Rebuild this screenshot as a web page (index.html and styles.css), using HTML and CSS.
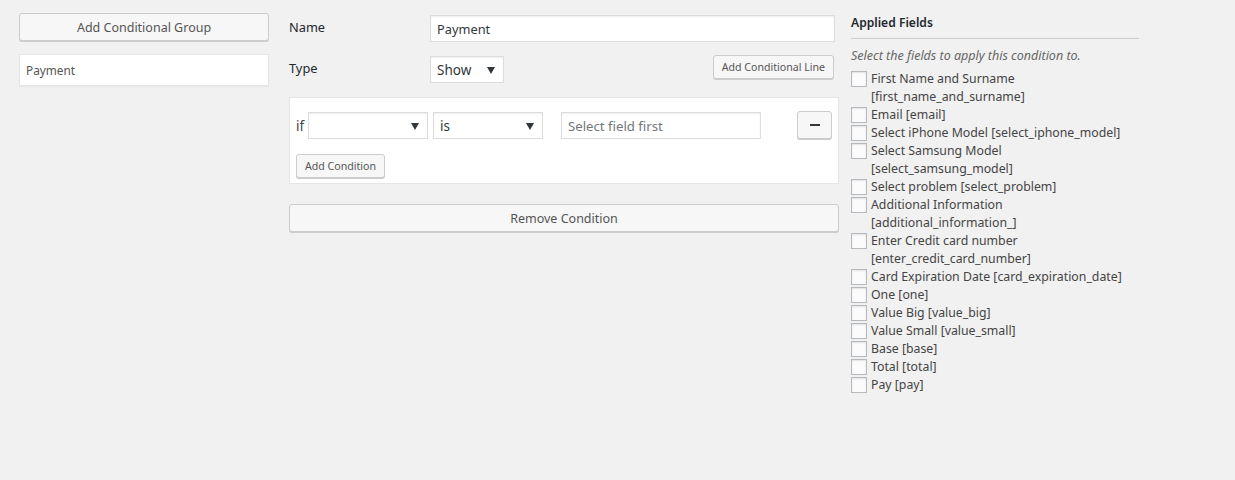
FILE: index.html
```html
<!DOCTYPE html>
<html>
<head lang="en">
    <meta charset="UTF-8">
    <title>Conditional Logic</title>
    <link rel="stylesheet" href="styles.css">
</head>
<body>
<div class="wrap">
    <!-- groups -->
    <div class="groups">
        <button class="button button-large" type="button">Add Conditional Group</button>
        <div class="group-item">Payment</div>
    </div>

    <!-- condition editor -->
    <div class="editor">
        <div class="form-row">
            <label class="form-label">Name</label>
            <input class="text-input" type="text" value="Payment">
        </div>
        <div class="form-row">
            <label class="form-label">Type</label>
            <div class="type-line">
                <span class="select select-type">Show</span>
                <button class="button button-small" type="button">Add Conditional Line</button>
            </div>
        </div>

        <div class="cond-box">
            <div class="cond-line">
                <span class="cond-if">if</span>
                <span class="select select-field"></span>
                <span class="select select-op">is</span>
                <input class="text-input cond-value" type="text" placeholder="Select field first">
                <button class="button button-minus" type="button"><span class="minus"></span></button>
            </div>
            <button class="button button-small" type="button">Add Condition</button>
        </div>

        <button class="button button-large button-block" type="button">Remove Condition</button>
    </div>

    <!-- applied fields -->
    <div class="applied">
        <h3 class="applied-title">Applied Fields</h3>
        <p class="applied-desc">Select the fields to apply this condition to.</p>
        <ul class="field-list">
            <li><span class="check"></span><span>First Name and Surname [first_name_and_surname]</span></li>
            <li><span class="check"></span><span>Email [email]</span></li>
            <li><span class="check"></span><span>Select iPhone Model [select_iphone_model]</span></li>
            <li><span class="check"></span><span>Select Samsung Model [select_samsung_model]</span></li>
            <li><span class="check"></span><span>Select problem [select_problem]</span></li>
            <li><span class="check"></span><span>Additional Information [additional_information_]</span></li>
            <li><span class="check"></span><span>Enter Credit card number [enter_credit_card_number]</span></li>
            <li><span class="check"></span><span>Card Expiration Date [card_expiration_date]</span></li>
            <li><span class="check"></span><span>One [one]</span></li>
            <li><span class="check"></span><span>Value Big [value_big]</span></li>
            <li><span class="check"></span><span>Value Small [value_small]</span></li>
            <li><span class="check"></span><span>Base [base]</span></li>
            <li><span class="check"></span><span>Total [total]</span></li>
            <li><span class="check"></span><span>Pay [pay]</span></li>
        </ul>
    </div>
</div>
</body>
</html>
```

FILE: styles.css
```css
* { margin: 0; padding: 0; box-sizing: border-box;}
ul { list-style: none;}
body {
    background-color: #f1f1f1;
    color: #444;
    font-family: "Noto Sans", "Open Sans", sans-serif;
    font-size: 12.3px;
    line-height: 18px;
}
.wrap {
    display: flex;
    align-items: flex-start;
    padding: 13px 0 0 19px;
}

/* buttons */
.button {
    display: inline-flex;
    align-items: center;
    justify-content: center;
    background-color: #f7f7f7;
    border: 1px solid #ccc;
    border-radius: 3px;
    box-shadow: 0 1px 0 #ccc;
    color: #555;
    font-family: inherit;
    cursor: pointer;
}
.button-large {
    height: 28px;
    font-size: 12.5px;
}
.button-small {
    height: 24px;
    padding: 0 8px;
    font-size: 10.6px;
}
.button-block { width: 100%;}

/* inputs */
.text-input {
    height: 27px;
    padding: 0 6px;
    background-color: #fff;
    border: 1px solid #ddd;
    box-shadow: inset 0 1px 2px rgba(0,0,0,.07);
    color: #32373c;
    font-family: inherit;
    font-size: 12.8px;
    outline: none;
}
.text-input::placeholder { color: #72777c;}
.select {
    position: relative;
    display: inline-flex;
    align-items: center;
    height: 27px;
    padding: 0 6px;
    background-color: #fff;
    border: 1px solid #ddd;
    box-shadow: inset 0 1px 2px rgba(0,0,0,.07);
    color: #32373c;
    font-size: 13.5px;
}
.select:after {
    content: "";
    position: absolute;
    right: 8px;
    top: 10px;
    border-left: 4px solid transparent;
    border-right: 4px solid transparent;
    border-top: 7px solid #32373c;
}

/* left column */
.groups {
    width: 250px;
    display: flex;
    flex-direction: column;
    gap: 13px;
}
.group-item {
    height: 32px;
    padding: 6px 6px;
    background-color: #fff;
    box-shadow: 0 1px 1px rgba(0,0,0,.04);
    border: 1px solid #e5e5e5;
    color: #555;
    font-size: 11.8px;
}

/* middle column */
.editor {
    width: 550px;
    margin-left: 20px;
    padding-top: 2px;
}
.form-row {
    display: grid;
    grid-template-columns: 141px 1fr;
    align-items: center;
    margin-bottom: 14px;
    color: #23282d;
    font-size: 12.8px;
}
.form-label { margin-top: -3px;}
.form-row .text-input { width: 405px;}
.type-line {
    display: flex;
    align-items: flex-start;
    justify-content: space-between;
    width: 404px;
}
.type-line .button-small { margin-top: -1px;}
.select-type { width: 74px;}

.cond-box {
    height: 87px;
    padding: 14px 6px 0 6px;
    background-color: #fff;
    border: 1px solid #e5e5e5;
    margin-bottom: 20px;
}
.cond-line {
    display: flex;
    align-items: center;
    margin-bottom: 15px;
}
.cond-if {
    width: 12px;
    font-size: 13.5px;
    color: #444;
}
.select-field { width: 120px; margin-right: 5px;}
.select-op { width: 110px; margin-right: 18px;}
.cond-value { width: 200px; font-size: 13.2px;}
.button-minus {
    width: 35px;
    height: 28px;
    margin-left: auto;
    margin-top: -2px;
}
.minus {
    width: 10px;
    height: 2px;
    background-color: #32373c;
}
.cond-box > .button-small { width: 89px; padding: 0;}

/* right column */
.applied {
    width: 288px;
    margin-left: 12px;
}
.applied-title {
    padding: 1px 0 6px;
    border-bottom: 1px solid #ccc;
    color: #23282d;
    font-size: 12.1px;
    font-weight: 600;
    line-height: 18px;
}
.applied-desc {
    margin: 8px 0 5px;
    color: #666;
    font-style: italic;
    font-size: 12.5px;
}
.field-list li {
    display: flex;
    align-items: flex-start;
}
.check {
    flex: none;
    width: 16px;
    height: 16px;
    margin: 1px 4px 0 0;
    background-color: #fbfbfb;
    border: 1px solid #b4b9be;
    box-shadow: inset 0 1px 2px rgba(0,0,0,.1);
}
```
